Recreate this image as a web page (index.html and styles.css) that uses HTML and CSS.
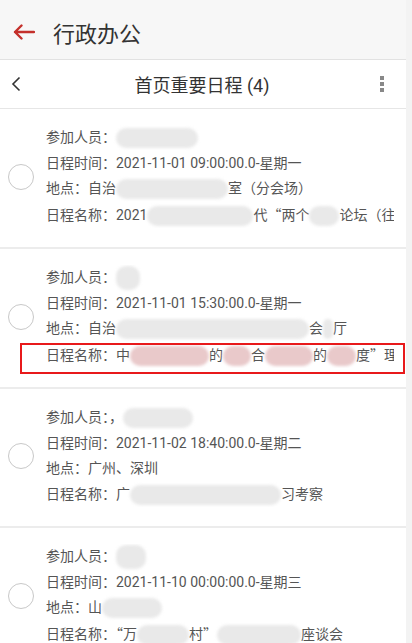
FILE: index.html
```html
<!DOCTYPE html>
<html lang="zh">
<head>
<meta charset="utf-8">
<link rel="stylesheet" href="styles.css">
</head>
<body>
<div class="page">
  <div class="main">
    <header class="appbar">
      <svg class="back" width="22" height="16" viewBox="0 0 22 16"><path d="M21 8H2M8.5 1.5L2 8l6.5 6.5" fill="none" stroke="#c4302b" stroke-width="2.4" stroke-linecap="round" stroke-linejoin="round"/></svg>
      <span class="appbar-title">行政办公</span>
    </header>
    <div class="subbar">
      <svg class="chev" width="10" height="16" viewBox="0 0 10 16"><path d="M8.5 1.5L2 8l6.5 6.5" fill="none" stroke="#333" stroke-width="1.6"/></svg>
      <span class="subbar-title">首页重要日程 (4)</span>
      <span class="dots"><i></i><i></i><i></i></span>
    </div>
    <ul class="list">
      <li class="item">
        <span class="radio"></span>
        <div class="lines">
          <p>参加人员：<span class="blob" style="width:82px"></span></p>
          <p>日程时间：2021-11-01 09:00:00.0-星期一</p>
          <p>地点：自治<span class="blob" style="width:112px"></span>室（分会场）</p>
          <p>日程名称：2021<span class="blob" style="width:106px"></span>代<span class="q">“</span>两个<span class="blob" style="width:30px"></span>论坛（往</p>
        </div>
      </li>
      <li class="item">
        <span class="radio"></span>
        <div class="lines">
          <p>参加人员：<span class="blob tall" style="width:24px"></span></p>
          <p>日程时间：2021-11-01 15:30:00.0-星期一</p>
          <p>地点：自治<span class="blob" style="width:193px"></span>会<span class="blob" style="width:10px"></span>厅</p>
          <p>日程名称：中<span class="blob pink" style="width:79px"></span>的<span class="blob pink" style="width:28px"></span>合<span class="blob pink" style="width:48px"></span>的<span class="blob pink" style="width:29px"></span>度<span class="q">”</span>理</p>
        </div>
        <span class="mark"></span>
      </li>
      <li class="item">
        <span class="radio"></span>
        <div class="lines">
          <p>参加人员：，<span class="blob" style="width:70px"></span></p>
          <p>日程时间：2021-11-02 18:40:00.0-星期二</p>
          <p>地点：广州、深圳</p>
          <p>日程名称：广<span class="blob" style="width:151px"></span>习考察</p>
        </div>
      </li>
      <li class="item">
        <span class="radio"></span>
        <div class="lines">
          <p>参加人员：<span class="blob tall" style="width:30px"></span></p>
          <p>日程时间：2021-11-10 00:00:00.0-星期三</p>
          <p>地点：山<span class="blob" style="width:60px"></span></p>
          <p>日程名称：<span class="q">“</span>万<span class="blob" style="width:52px"></span>村<span class="q">”</span><span class="blob" style="width:84px"></span>座谈会</p>
        </div>
      </li>
    </ul>
  </div>
  <div class="edge"></div>
</div>
</body>
</html>
```
FILE: styles.css
```css
html, body {
  margin: 0;
  padding: 0;
  background: #fff;
  font-family: Roboto, "Noto Sans CJK SC", sans-serif;
}
.page {
  display: flex;
  width: 412px;
  height: 643px;
  overflow: hidden;
}
.main {
  width: 406px;
  flex: none;
}
.edge {
  flex: 1;
  background: #f3f3f3;
}
.appbar {
  height: 60px;
  background: #f7f7f7;
  border-bottom: 1px solid #e2e2e2;
  display: flex;
  align-items: center;
  box-sizing: border-box;
  padding-left: 13px;
  padding-top: 4px;
}
.back { flex: none; }
.appbar-title {
  margin-left: 18px;
  font-size: 22px;
  color: #333;
}
.subbar {
  height: 48px;
  display: flex;
  align-items: center;
  justify-content: center;
  position: relative;
  border-bottom: 1px solid #e6e6e6;
}
.chev {
  position: absolute;
  left: 11px;
  top: 16px;
}
.subbar-title {
  font-size: 18px;
  color: #333;
  margin-left: -2px;
}
.dots {
  position: absolute;
  right: 22px;
  top: 16px;
  display: flex;
  flex-direction: column;
  gap: 2px;
}
.dots i {
  display: block;
  width: 4px;
  height: 4px;
  background: #888;
}
.list {
  list-style: none;
  margin: 0;
  padding: 0;
}
.item {
  position: relative;
  display: flex;
  align-items: center;
  padding: 16px 0 19px 8px;
  border-bottom: 2px solid #ececec;
}
.radio {
  flex: none;
  width: 24px;
  height: 24px;
  border: 1px solid #c8c8c8;
  border-radius: 50%;
}
.lines {
  margin-left: 12px;
  width: 348px;
  overflow: hidden;
}
.lines p {
  margin: 0;
  font-size: 14px;
  line-height: 25.5px;
  color: #555;
  white-space: nowrap;
}
.q {
  font-family: "Noto Sans CJK SC", sans-serif;
}
.blob {
  display: inline-block;
  height: 20px;
  vertical-align: middle;
  background: #e9e9e9;
  border-radius: 10px;
  filter: blur(1.5px);
}
.blob.tall { height: 24px; }
.blob.pink { background: #e9c9ca; }
.mark {
  position: absolute;
  left: 20px;
  top: 94px;
  width: 381px;
  height: 27px;
  border: 2px solid #e8191b;
}
```
